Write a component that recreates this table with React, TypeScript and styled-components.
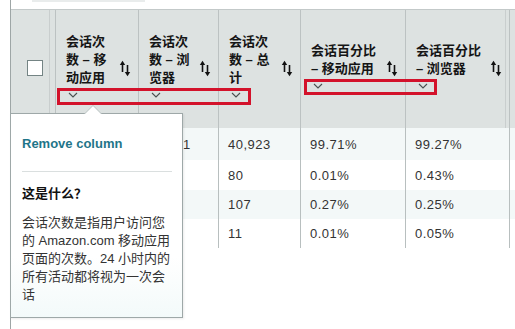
import React from "react";
import styled, { createGlobalStyle } from "styled-components";

const GlobalStyle = createGlobalStyle`
  html, body {
    margin: 0;
    padding: 0;
    background: #fff;
  }
  body {
    font-family: "Liberation Sans", "Noto Sans CJK SC", sans-serif;
  }
`;

const Page = styled.div`
  position: relative;
  width: 515px;
  height: 329px;
  overflow: hidden;
  background: #fff;
`;

const Frame = styled.div`
  margin-left: 10px;
  height: 329px;
  border-left: 1px solid #9ea6a6;
  box-sizing: border-box;
`;

const TopStrip = styled.div`
  height: 9px;
  border-bottom: 1px solid #c3c9c9;
`;

const TopBar = styled.div`
  margin-left: 21px;
  width: 113px;
  height: 2px;
  background: #e9ecec;
`;

const HeaderRow = styled.div`
  display: flex;
  height: 118px;
  background: #dde2e1;
`;

const HeadCell = styled.div<{ $w: number; $last?: boolean }>`
  position: relative;
  width: ${(p) => p.$w}px;
  box-sizing: border-box;
  display: flex;
  align-items: center;
  justify-content: space-between;
  padding: 4px 7px 6px 10px;
  border-left: 1px solid #bcc2c2;
  border-right: ${(p) => (p.$last ? "1px solid #bcc2c2" : "none")};
  &::after {
    content: "";
    display: ${(p) => (p.$last ? "block" : "none")};
    position: absolute;
    top: 0;
    bottom: 0;
    right: 3px;
    width: 1px;
    background: #c9cece;
  }
`;

const CheckCell = styled.div`
  position: relative;
  width: 44px;
  display: flex;
  align-items: center;
  justify-content: center;
  padding-bottom: 2px;
  box-sizing: border-box;
  &::after {
    content: "";
    position: absolute;
    top: 0;
    bottom: 0;
    right: 5px;
    width: 1px;
    background: #c9cece;
  }
`;

const Checkbox = styled.div`
  width: 14px;
  height: 14px;
  margin-left: 4px;
  background: #fff;
  border: 1px solid #748484;
`;

const TitleBlock = styled.div`
  display: flex;
  flex-direction: column;
`;

const Title = styled.div`
  font-size: 13px;
  font-weight: bold;
  line-height: 18px;
  color: #151515;
  white-space: nowrap;
`;

const ChevronRow = styled.div`
  height: 16px;
  display: flex;
  align-items: center;
  padding-left: 2px;
`;

const BodyRow = styled.div<{ $h: number; $tint: boolean }>`
  display: flex;
  height: ${(p) => p.$h}px;
  background: ${(p) => (p.$tint ? "#f3f8f8" : "#fff")};
`;

const BodyCell = styled.div<{ $w: number; $last?: boolean }>`
  width: ${(p) => p.$w}px;
  box-sizing: border-box;
  display: flex;
  align-items: center;
  padding-left: 9px;
  border-left: 1px solid #b8bfbf;
  border-right: ${(p) => (p.$last ? "1px solid #b8bfbf" : "none")};
  font-size: 13px;
  letter-spacing: 0.5px;
  color: #333;
  white-space: nowrap;
`;

const EmptyCell = styled.div`
  width: 44px;
`;

const Highlight = styled.div<{ $x: number; $y: number; $w: number; $h: number }>`
  position: absolute;
  left: ${(p) => p.$x}px;
  top: ${(p) => p.$y}px;
  width: ${(p) => p.$w}px;
  height: ${(p) => p.$h}px;
  box-sizing: border-box;
  border: 3px solid #d3122b;
`;

const Popover = styled.div`
  position: absolute;
  left: 10px;
  top: 113px;
  width: 173px;
  height: 205px;
  box-sizing: border-box;
  padding: 21px 10px 0 11px;
  background: linear-gradient(#ffffff 70%, #f3fafa);
  border: 1px solid #9ea8a8;
  box-shadow: 1px 1px 2px rgba(0, 0, 0, 0.08);
  &::before,
  &::after {
    content: "";
    position: absolute;
    left: 73px;
    width: 0;
    height: 0;
    border-left: 9px solid transparent;
    border-right: 9px solid transparent;
  }
  &::before {
    top: -9px;
    border-bottom: 9px solid #b9c2c2;
  }
  &::after {
    top: -8px;
    border-bottom: 9px solid #fff;
  }
`;

const RemoveLink = styled.a`
  display: block;
  font-size: 13px;
  font-weight: bold;
  line-height: 18px;
  color: #1f7589;
  text-decoration: none;
  cursor: pointer;
`;

const Divider = styled.div`
  height: 1px;
  margin: 18px 0 13px;
  background: #dadfdf;
`;

const HelpTitle = styled.div`
  font-size: 13px;
  font-weight: bold;
  line-height: 18px;
  color: #111;
`;

const HelpText = styled.p`
  margin: 11px 0 0;
  font-size: 13px;
  line-height: 18px;
  color: #333;
  white-space: nowrap;
`;

const SortIcon = () => (
  <svg width="12" height="17" viewBox="0 0 12 17">
    <path d="M3.5 3.5V12" stroke="#111" strokeWidth="1.6" fill="none" />
    <path d="M0.8 5L3.5 0.8L6.2 5Z" fill="#111" />
    <path d="M8.5 5V13.5" stroke="#111" strokeWidth="1.6" fill="none" />
    <path d="M5.8 12L8.5 16.2L11.2 12Z" fill="#111" />
  </svg>
);

const Chevron = () => (
  <svg width="10" height="6" viewBox="0 0 10 6">
    <path d="M1 1L5 5L9 1" stroke="#4a5050" strokeWidth="1.1" fill="none" />
  </svg>
);

const columns = [
  { width: 83, lines: ["会话次", "数 – 移", "动应用"] },
  { width: 80, lines: ["会话次", "数 – 浏", "览器"] },
  { width: 82, lines: ["会话次", "数 – 总", "计"] },
  { width: 105, lines: ["会话百分比", "– 移动应用"] },
  { width: 105, lines: ["会话百分比", "– 浏览器"] },
];

// the first two columns sit under the popover; only the tail of row 1 shows
const rows = [
  { h: 32, values: ["", "40,621", "40,923", "99.71%", "99.27%"] },
  { h: 30, values: ["", "", "80", "0.01%", "0.43%"] },
  { h: 29, values: ["", "", "107", "0.27%", "0.25%"] },
  { h: 29, values: ["", "", "11", "0.01%", "0.05%"] },
];

export default function App() {
  return (
    <Page>
      <GlobalStyle />
      <Frame>
        <TopStrip>
          <TopBar />
        </TopStrip>
        <HeaderRow>
          <CheckCell>
            <Checkbox />
          </CheckCell>
          {columns.map((col, i) => (
            <HeadCell key={i} $w={col.width} $last={i === columns.length - 1}>
              <TitleBlock>
                {col.lines.map((line) => (
                  <Title key={line}>{line}</Title>
                ))}
                <ChevronRow>
                  <Chevron />
                </ChevronRow>
              </TitleBlock>
              <SortIcon />
            </HeadCell>
          ))}
        </HeaderRow>
        {rows.map((row, r) => (
          <BodyRow key={r} $h={row.h} $tint={r % 2 === 0}>
            <EmptyCell />
            {row.values.map((v, i) => (
              <BodyCell key={i} $w={columns[i].width} $last={i === columns.length - 1}>
                {v}
              </BodyCell>
            ))}
          </BodyRow>
        ))}
      </Frame>

      <Highlight $x={57} $y={88} $w={194} $h={17} />
      <Highlight $x={304} $y={79} $w={133} $h={16} />

      <Popover>
        <RemoveLink>Remove column</RemoveLink>
        <Divider />
        <HelpTitle>这是什么？</HelpTitle>
        <HelpText>
          会话次数是指用户访问您
          <br />
          的 Amazon.com 移动应用
          <br />
          页面的次数。24 小时内的
          <br />
          所有活动都将视为一次会
          <br />
          话
        </HelpText>
      </Popover>
    </Page>
  );
}
